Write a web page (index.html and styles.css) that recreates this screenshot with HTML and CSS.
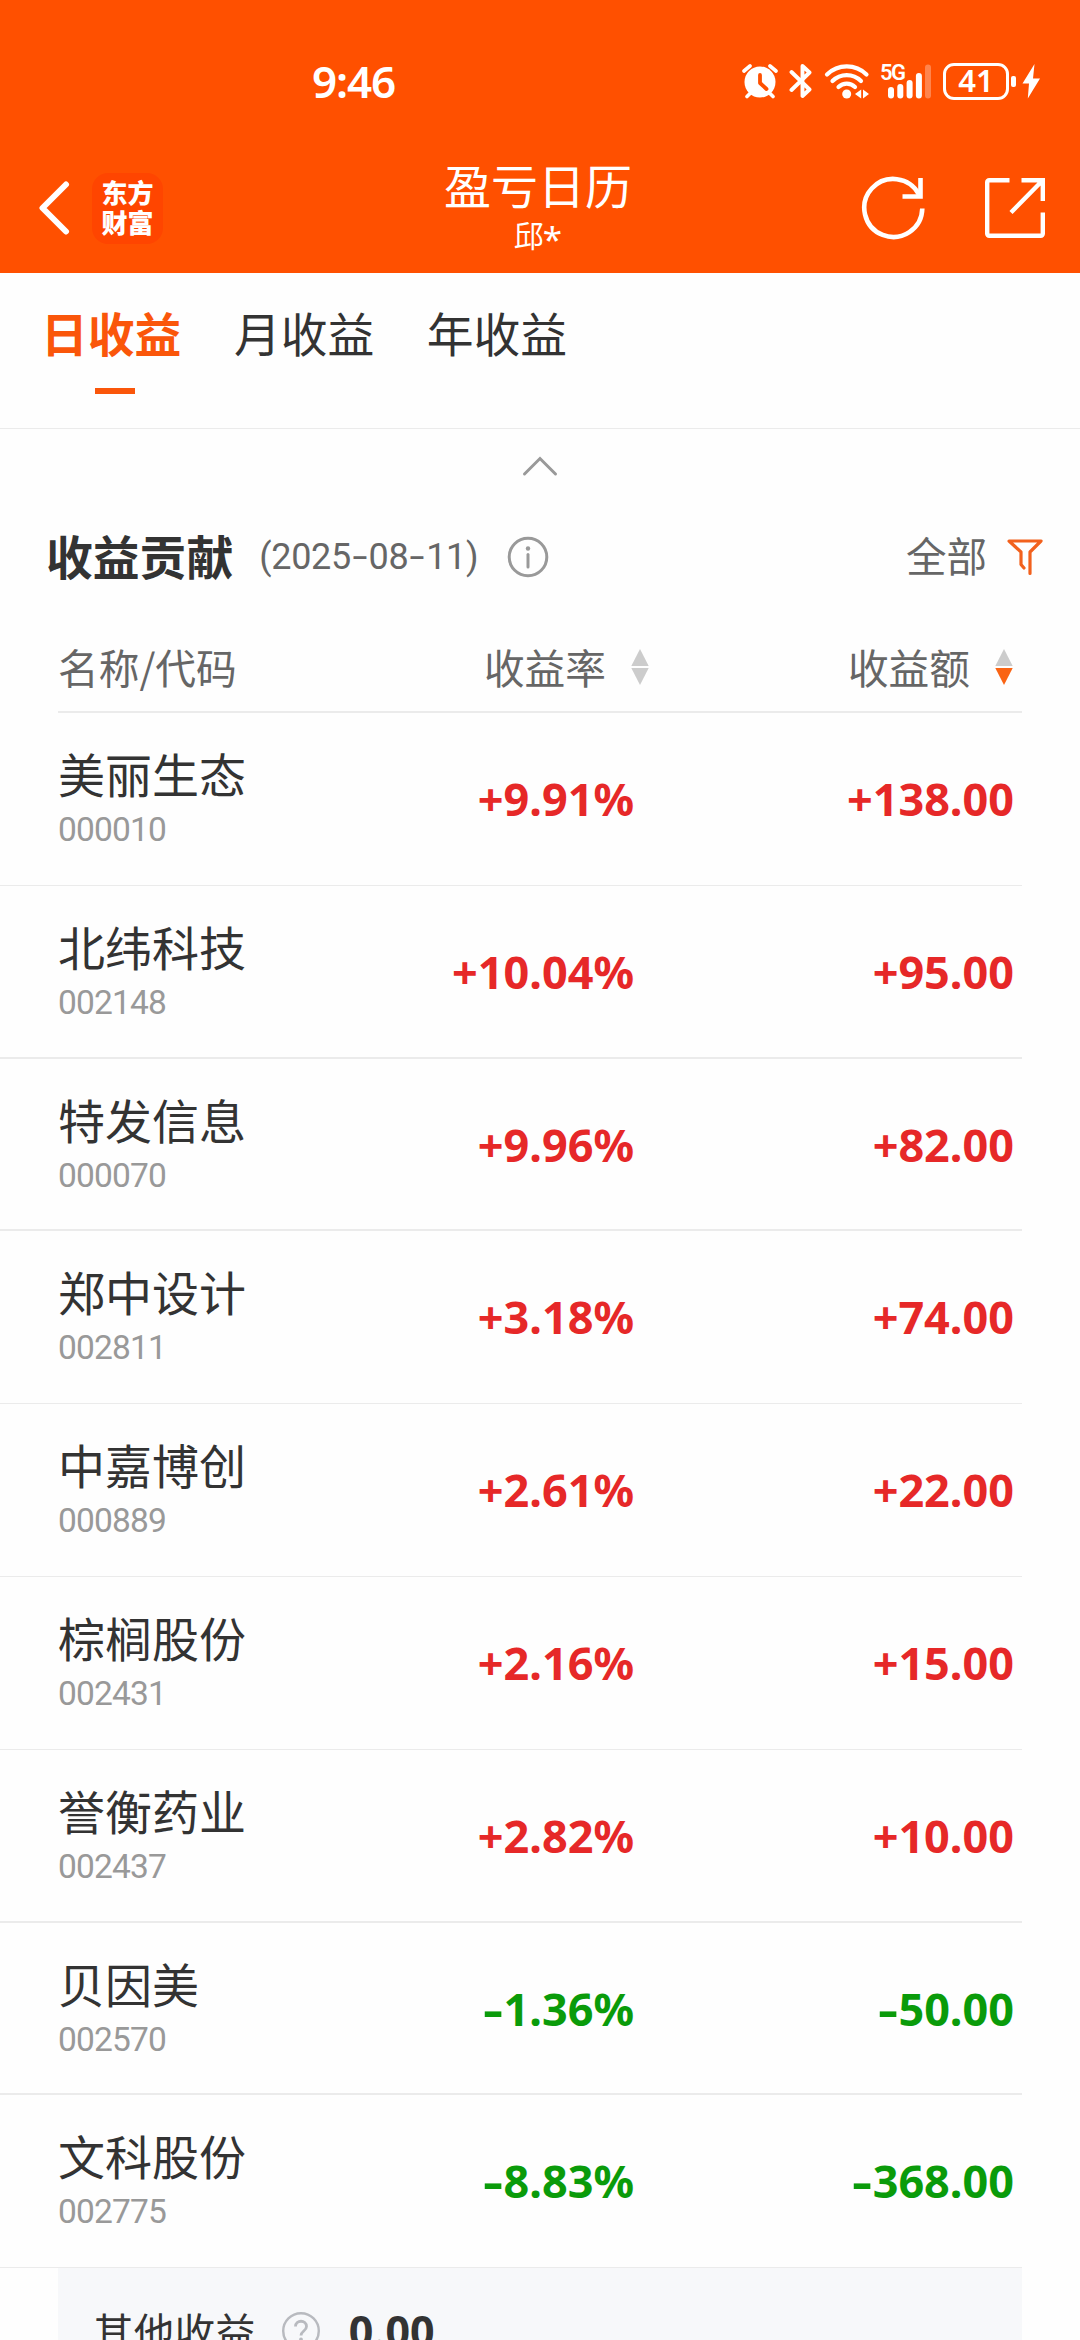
FILE: index.html
```
<!DOCTYPE html>
<html lang="zh-CN">
<head>
<meta charset="utf-8">
<title>盈亏日历</title>
<link rel="stylesheet" href="styles.css">
</head>
<body>
<header class="top">
  <div class="status">
    <span class="time">9:46</span>
    <div class="status-icons">
      <svg class="ic-alarm" width="38" height="38" viewBox="0 0 38 38" fill="none" stroke="#fff" stroke-linecap="round">
        <circle cx="19" cy="20" r="15.5" fill="#fff" stroke="none"/>
        <path d="M3 9l6-5M35 9l-6-5M6 34.500l5-5M32 34.500l-5-5" stroke-width="3.600"/>
        <path d="M19 13v8l6.500 6" stroke="#ff5000" stroke-width="3.800" stroke-linejoin="round"/>
      </svg>
      <svg class="ic-bt" width="24" height="38" viewBox="0 0 24 38" fill="none" stroke="#fff" stroke-width="3.900" stroke-linejoin="round" stroke-linecap="round">
        <path d="M2.500 10l18 17.500-7 6.500V4l7 6.500L2.500 28"/>
      </svg>
      <svg class="ic-wifi" width="46" height="38" viewBox="0 0 46 38" fill="none" stroke="#fff" stroke-width="4.200" stroke-linecap="round">
        <path d="M3 12.500a28 28 0 0 1 39.500 0M8.500 19a20 20 0 0 1 28.500 0M14.500 25a12 12 0 0 1 16.500 0"/>
        <circle cx="22.700" cy="32" r="4.500" fill="#fff" stroke="none"/>
        <path d="M37.200 27.500v9L31 32zM39 27.500v9L45 32z" fill="#fff" stroke="none"/>
      </svg>
      <div class="signal">
        <span class="net">5G</span>
        <svg width="52" height="38" viewBox="0 0 52 38" fill="#fff">
          <rect x="8" y="25" width="6" height="11.500" rx="3"/>
          <rect x="17.300" y="22" width="6" height="14.500" rx="3"/>
          <rect x="26.600" y="18" width="6" height="18.500" rx="3"/>
          <rect x="35.900" y="11" width="6" height="25.500" rx="3"/>
          <rect x="45" y="2.500" width="6" height="34" rx="3" opacity=".3"/>
        </svg>
      </div>
      <div class="battery">41</div>
      <div class="nub"></div>
      <svg class="ic-bolt" width="18" height="38" viewBox="0 0 18 38" fill="#fff">
        <path d="M12.500 2L.5 21.500h6.500L5.800 36.500 18 16.500H11z"/>
      </svg>
    </div>
  </div>
  <nav class="bar">
    <svg class="back" width="32" height="56" viewBox="0 0 32 56" fill="none" stroke="#fff" stroke-width="6" stroke-linecap="round" stroke-linejoin="round">
      <path d="M28 4.500L4.500 28 28 51.500"/>
    </svg>
    <div class="logo"><span>东方</span><span>财富</span></div>
    <div class="heading">
      <h1 class="title">盈亏日历</h1>
      <div class="user">邱<span class="star">*</span></div>
    </div>
    <svg class="refresh" width="64" height="64" viewBox="0 0 64 64" fill="none" stroke="#fff" stroke-width="4.600">
      <path d="M61.300 32.500A29 29 0 1 1 58 18.500"/>
      <path d="M59.500 2v18.500H41.500"/>
    </svg>
    <svg class="share" width="62" height="62" viewBox="0 0 62 62" fill="none" stroke="#fff" stroke-width="4.400">
      <path d="M25.500 3.200H5.200a2 2 0 0 0-2 2v51.600a2 2 0 0 0 2 2h51.600a2 2 0 0 0 2-2V35.500M37.500 3.200h21.300V24M58 4L27 35.500"/>
    </svg>
  </nav>
</header>

<div class="tabs">
  <div class="tab tab-on">日收益</div>
  <div class="tab">月收益</div>
  <div class="tab">年收益</div>
</div>

<div class="fold">
  <svg width="38" height="22" viewBox="0 0 38 22" fill="none" stroke="#999" stroke-width="3" stroke-linecap="round">
    <path d="M3.500 19L19 3.500 34.500 19"/>
  </svg>
</div>

<section class="summary">
  <h2 class="sum-title">收益贡献</h2>
  <span class="date">(2025<span class="dash">-</span>08<span class="dash">-</span>11)</span>
  <svg class="info" width="42" height="42" viewBox="0 0 42 42" fill="none" stroke="#999" stroke-width="3">
    <circle cx="21" cy="21" r="18.800"/>
    <path d="M21 18.500v12.500" stroke-linecap="round"/>
    <circle cx="21" cy="12.500" r="2.200" fill="#999" stroke="none"/>
  </svg>
  <span class="all">全部</span>
  <svg class="funnel" width="36" height="38" viewBox="0 0 36 38" fill="none" stroke="#f2611d" stroke-width="3.200" stroke-linecap="round" stroke-linejoin="round">
    <path d="M23 35.500V14L34 3H2l12 11v12.500l3 3.500"/>
  </svg>
</section>

<div class="grid thead">
  <div>名称/代码</div>
  <div class="sort">收益率<svg width="18" height="36" viewBox="0 0 18 36"><path d="M9 0l8.700 17H.3z" fill="#ccc"/><path d="M9 36L.3 19h17.400z" fill="#ccc"/></svg></div>
  <div class="sort">收益额<svg width="18" height="36" viewBox="0 0 18 36"><path d="M9 0l8.700 17H.3z" fill="#ccc"/><path d="M9 36L.3 19h17.400z" fill="#fa6414"/></svg></div>
</div>

<main class="rows">
  <div class="grid row"><div><div class="name">美丽生态</div><div class="code">000010</div></div><div class="num">+9.91%</div><div class="num">+138.00</div></div>
  <div class="grid row thick"><div><div class="name">北纬科技</div><div class="code">002148</div></div><div class="num">+10.04%</div><div class="num">+95.00</div></div>
  <div class="grid row thick"><div><div class="name">特发信息</div><div class="code">000070</div></div><div class="num">+9.96%</div><div class="num">+82.00</div></div>
  <div class="grid row"><div><div class="name">郑中设计</div><div class="code">002811</div></div><div class="num">+3.18%</div><div class="num">+74.00</div></div>
  <div class="grid row"><div><div class="name">中嘉博创</div><div class="code">000889</div></div><div class="num">+2.61%</div><div class="num">+22.00</div></div>
  <div class="grid row"><div><div class="name">棕榈股份</div><div class="code">002431</div></div><div class="num">+2.16%</div><div class="num">+15.00</div></div>
  <div class="grid row thick"><div><div class="name">誉衡药业</div><div class="code">002437</div></div><div class="num">+2.82%</div><div class="num">+10.00</div></div>
  <div class="grid row thick"><div><div class="name">贝因美</div><div class="code">002570</div></div><div class="num down"><span class="minus">-</span>1.36%</div><div class="num down"><span class="minus">-</span>50.00</div></div>
  <div class="grid row"><div><div class="name">文科股份</div><div class="code">002775</div></div><div class="num down"><span class="minus">-</span>8.83%</div><div class="num down"><span class="minus">-</span>368.00</div></div>
</main>

<footer class="other">
  <span>其他收益</span>
  <svg width="40" height="40" viewBox="0 0 40 40" fill="none" stroke="#b8babf" stroke-width="2.400">
    <circle cx="20" cy="20" r="17.800"/>
    <path d="M14.500 15.500c0-7 11-7 11 0 0 4.500-5.500 4.500-5.500 9" stroke-width="2.800"/>
    <circle cx="20" cy="28.500" r="1.900" fill="#b8babf" stroke="none"/>
  </svg>
  <span class="other-num">0.00</span>
</footer>
</body>
</html>
```
FILE: styles.css
```
* { box-sizing: border-box; }

body {
  margin: 0;
  width: 1080px;
  height: 2340px;
  overflow: hidden;
  background: #fefefe;
  color: #333;
  font-family: "Noto Sans CJK SC", sans-serif;
}

svg { display: block; flex: none; }
h1, h2 { margin: 0; font-weight: 400; }

/* header */
.top { height: 273px; background: #ff5000; color: #fff; }
.status { display: flex; align-items: center; justify-content: space-between; height: 162px; padding: 0 40px 0 312px; }
.time { font: 600 44px/60px "Noto Sans", sans-serif; letter-spacing: -1.2px; }
.status-icons { display: flex; align-items: center; }
.ic-bt { margin-left: 10px; }
.ic-wifi { margin-left: 11px; }
.signal { display: flex; position: relative; margin-left: 10px; }
.net { position: absolute; left: 0; top: 0; font: 600 22px/22px Roboto, sans-serif; letter-spacing: -1.5px; }
.battery {
  width: 66px; height: 37px; margin-left: 11px;
  border: 3px solid #fff; border-radius: 11px;
  font: 600 31px/29px "Noto Sans", sans-serif; text-align: center;
}
.nub { width: 5px; height: 11px; margin-left: 2px; border-radius: 2px; background: #fff; }
.ic-bolt { margin-left: 6px; }

.bar { display: flex; align-items: center; height: 92px; padding-left: 38px; }
.logo {
  display: flex; flex-direction: column; align-items: center; justify-content: center;
  width: 71px; height: 71px; margin-left: 22px; padding-bottom: 3px;
  border-radius: 16px; background: #ff4500;
  font-weight: 900; font-size: 26px; line-height: 30px;
}
.heading { width: 300px; margin-left: 225px; text-align: center; }
.title { font-size: 47px; line-height: 52px; }
.user { font-size: 30px; line-height: 48px; }
.star { font: 400 35px/30px "Noto Sans", sans-serif; vertical-align: -5px; margin-left: -1px; }
.refresh { margin-left: 173px; }
.share { margin-left: 59px; }

/* tabs */
.tabs { display: flex; gap: 52.500px; height: 156px; padding: 27px 0 0 41px; border-bottom: 1px solid #ebebeb; }
.tab { font-size: 46.800px; line-height: 64px; height: 94px; }
.tab-on { display: flex; flex-direction: column; color: #fa560a; font-weight: 700; }
.tab-on::after { content: ""; width: 40px; height: 6px; margin: 24px 0 0 54px; background: #fa560a; }

.fold { display: flex; justify-content: center; padding-top: 26px; height: 87px; }

/* summary line */
.summary { display: flex; align-items: center; height: 82px; padding: 0 37px 0 46px; }
.sum-title { padding-bottom: 4px; font-size: 46.800px; font-weight: 700; line-height: 60px; }
.date { margin-left: 26px; color: #666; font: 400 36px/50px Roboto, sans-serif; letter-spacing: -0.300px; }
.dash { display: inline-block; margin: 0 4px; transform: scaleX(1.5); }
.info { margin-left: 29px; }
.all { margin-left: auto; padding-bottom: 4px; color: #666; font-size: 40.500px; line-height: 56px; }
.funnel { margin-left: 20px; }

/* table */
.grid { display: grid; grid-template-columns: 300px 276px 380px; align-items: center; }
.thead {
  height: 115px; width: 964px; margin-left: 58px; padding-top: 24px;
  border-bottom: 2px solid #ebebeb; color: #666; font-size: 40.700px; line-height: 56px;
  grid-template-columns: 300px 291px 364px;
}
.sort { display: flex; align-items: center; justify-content: flex-end; gap: 25px; }
.row { width: 1022px; height: 172.800px; padding: 31px 0 0 58px; border-bottom: 1px solid #ebebeb; align-items: start; }
.thick { border-bottom-width: 2px; }
.name { font-size: 47px; line-height: 58px; }
.code { padding-top: 5px; color: #999; font: 400 33.500px/46px Roboto, sans-serif; letter-spacing: -0.850px; }
.num { padding-top: 25px; text-align: right; color: #e62828; font: 700 45px/60px "Noto Sans", sans-serif; }
.down { color: #0a9b0a; }
.minus { display: inline-block; margin-right: 3px; transform: scaleX(1.4); }

/* other income */
.other {
  display: flex; align-items: center; width: 964px; height: 125px; margin-left: 58px; padding-left: 35px;
  background: #f7f8fa; font-size: 40.700px; line-height: 56px;
}
.other svg { margin-left: 25px; }
.other-num { margin-left: 28px; font: 700 43px/56px "Noto Sans", sans-serif; }
```
